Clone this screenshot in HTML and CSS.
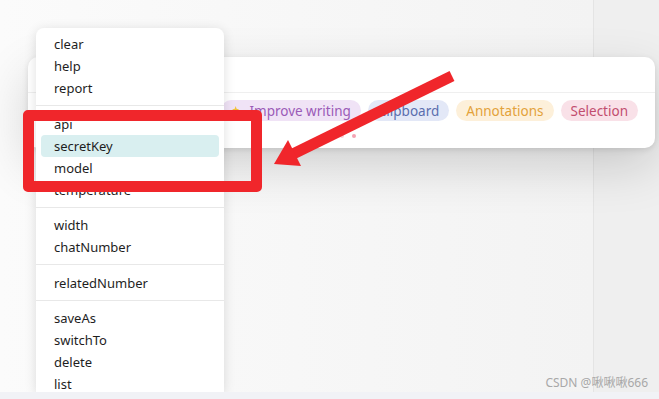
FILE: index.html
```html
<!DOCTYPE html>
<html lang="en">
  <head>
    <meta charset="UTF-8" />
    <meta name="viewport" content="width=device-width, initial-scale=1.0" />
    <title>Command Menu</title>
    <link rel="stylesheet" href="styles.css">
  </head>
  <body>
    <div class="app">
      <main class="workspace"></main>
      <aside class="sidebar"></aside>
    </div>
    <div class="statusbar"></div>

    <!-- Floating prompt card -->
    <div class="prompt-card">
      <div class="prompt-input"></div>
      <div class="chip-row">
        <span class="chip chip-purple">
          <svg class="sparkle" viewBox="0 0 12 12" width="11" height="11">
            <path d="M4 1 L5 4 L8 5 L5 6 L4 9 L3 6 L0 5 L3 4 Z" fill="#f2c23a" />
            <path d="M9 6 L9.6 7.6 L11.2 8.2 L9.6 8.8 L9 10.4 L8.4 8.8 L6.8 8.2 L8.4 7.6 Z" fill="#f2c23a" />
          </svg>
          Improve writing
        </span>
        <span class="chip chip-blue">Clipboard</span>
        <span class="chip chip-orange">Annotations</span>
        <span class="chip chip-pink">Selection</span>
      </div>
      <div class="loading">
        <span class="dot"></span>
        <span class="dot faint"></span>
        <span class="dot"></span>
      </div>
    </div>

    <!-- Slash command menu -->
    <div class="command-menu">
      <div class="menu-item">clear</div>
      <div class="menu-item">help</div>
      <div class="menu-item">report</div>
      <div class="menu-sep"></div>
      <div class="menu-item">api</div>
      <div class="menu-item active">secretKey</div>
      <div class="menu-item">model</div>
      <div class="menu-item">temperature</div>
      <div class="menu-sep"></div>
      <div class="menu-item">width</div>
      <div class="menu-item">chatNumber</div>
      <div class="menu-sep"></div>
      <div class="menu-item">relatedNumber</div>
      <div class="menu-sep"></div>
      <div class="menu-item">saveAs</div>
      <div class="menu-item">switchTo</div>
      <div class="menu-item">delete</div>
      <div class="menu-item">list</div>
    </div>

    <!-- Red annotation -->
    <div class="mark-box"></div>
    <svg class="mark-arrow" width="659" height="399" viewBox="0 0 659 399">
      <line x1="452" y1="76" x2="293" y2="154" stroke="#f0262b" stroke-width="11" />
      <polygon points="274,164 288,140 301,166" fill="#f0262b" />
    </svg>

    <div class="watermark">CSDN @啾啾啾666</div>
  </body>
</html>
```

FILE: styles.css
```css
/* Global Styles */
* {
  box-sizing: border-box;
  margin: 0;
  padding: 0;
}
body {
  font-family: "Segoe UI", "Noto Sans", "Noto Sans CJK SC", sans-serif;
  width: 659px;
  height: 399px;
  overflow: hidden;
  position: relative;
  background: #f9f9f9;
}
/* Page frame */
.app {
  display: flex;
  height: 392px;
}
.workspace {
  flex: 1;
  background: linear-gradient(to right, #fbfbfb, #f3f3f3);
}
.sidebar {
  width: 66px;
  background: #efefef;
  border-left: 1px solid #e4e4e4;
}
.statusbar {
  height: 7px;
  background: #f1f2f6;
  position: relative;
  z-index: 5;
}
/* Prompt card */
.prompt-card {
  position: absolute;
  left: 28px;
  top: 57px;
  width: 627px;
  height: 91px;
  background: #fff;
  border-radius: 10px;
  box-shadow: 0 18px 50px rgba(0, 0, 0, 0.16), 0 2px 6px rgba(0, 0, 0, 0.1);
}
.prompt-input {
  height: 36px;
  border-bottom: 1px solid #efefef;
}
.chip-row {
  display: flex;
  justify-content: flex-end;
  gap: 7px;
  padding: 7px 17px 0;
}
.chip {
  display: inline-flex;
  align-items: center;
  gap: 3px;
  height: 21px;
  padding: 0 10px;
  border-radius: 11px;
  font-size: 13.5px;
  white-space: nowrap;
}
.chip-purple {
  padding-left: 8px;
}
.sparkle {
  margin: 0 3px 0 3px;
}
.chip-purple {
  background: #f0e3f6;
  color: #9b5bb8;
}
.chip-blue {
  background: #e3e8f7;
  color: #5a6eae;
}
.chip-orange {
  background: #fdf0da;
  color: #e3a23a;
}
.chip-pink {
  background: #f9e1e8;
  color: #c24d6f;
}
.loading {
  display: flex;
  justify-content: center;
  gap: 8px;
  margin-top: 13px;
}
.dot {
  width: 4px;
  height: 4px;
  border-radius: 50%;
  background: #f4a3b3;
}
.dot.faint {
  background: #f9d3da;
}
/* Command menu */
.command-menu {
  position: absolute;
  left: 36px;
  top: 28px;
  width: 188px;
  height: 364px;
  overflow: hidden;
  background: #fff;
  border-radius: 8px 8px 0 0;
  padding: 5px 0;
  box-shadow: 0 2px 12px rgba(0, 0, 0, 0.13);
}
.menu-item {
  height: 22px;
  line-height: 22px;
  margin: 0 5px;
  padding: 0 13px;
  border-radius: 4px;
  font-size: 13px;
  color: #1e1e1e;
}
.menu-item.active {
  background: #d9eff0;
}
.menu-sep {
  height: 1px;
  margin: 6px 0 6.5px;
  background: #e8e8e8;
}
/* Red annotation */
.mark-box {
  position: absolute;
  left: 23px;
  top: 110px;
  width: 239px;
  height: 82px;
  border: 11px solid #f0262b;
  border-radius: 5px;
}
.mark-arrow {
  position: absolute;
  left: 0;
  top: 0;
}
.watermark {
  position: absolute;
  right: 11px;
  bottom: 8px;
  font-size: 12px;
  color: #a8a8a8;
  z-index: 6;
}
```
